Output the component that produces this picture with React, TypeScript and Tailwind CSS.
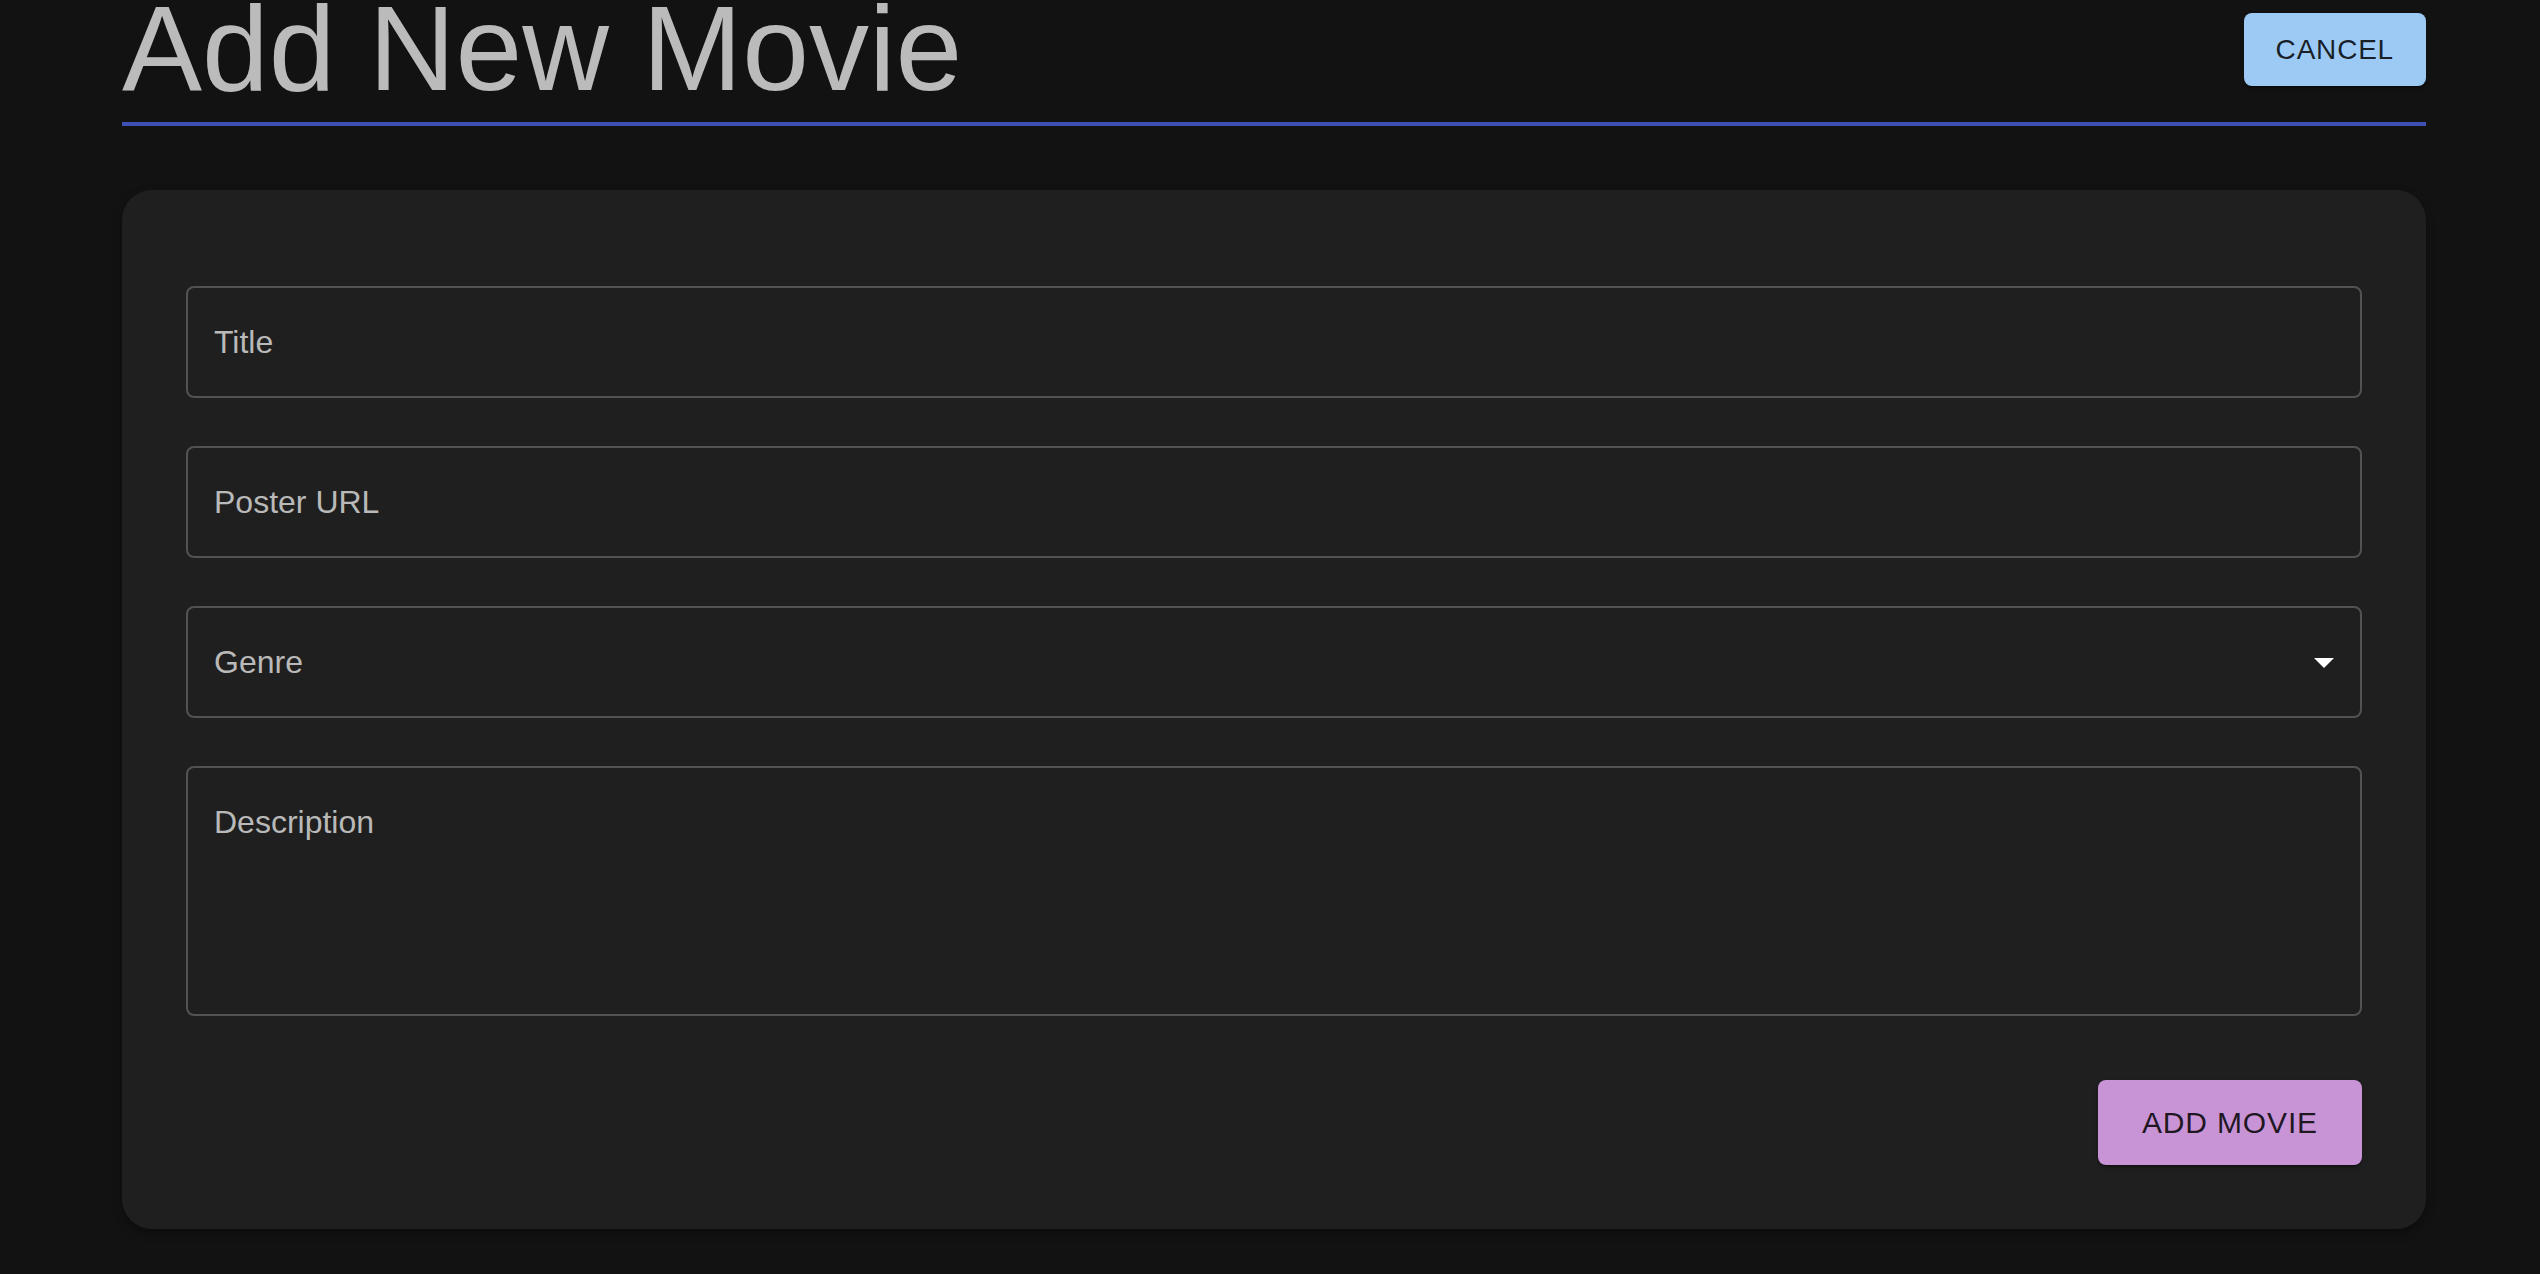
import React from "react";

function ArrowDropDown() {
  return (
    <svg viewBox="0 0 24 24" className="h-12 w-12 fill-white">
      <path d="M7 10l5 5 5-5z" />
    </svg>
  );
}

function TextField({ label }: { label: string }) {
  return (
    <input
      type="text"
      placeholder={label}
      className="mt-8 mb-4 block h-[112px] w-full rounded-lg border-2 border-[#525252] bg-transparent px-[26px] text-[32px] leading-[46px] text-white outline-none placeholder:text-[#b9b9b9]"
    />
  );
}

export default function App() {
  return (
    <main className="min-h-screen overflow-hidden bg-[#121212] font-['Liberation_Sans',Arial,sans-serif]">
      <div className="ml-[122px] w-[2304px]">
        <div className="-mt-6 flex items-center justify-between border-b-4 border-[#3f51b5] pb-[2px]">
          <h1 className="text-[120px] font-light leading-[1.2] text-[#bbbbbb]">
            Add New Movie
          </h1>
          <button className="mt-[3px] h-[73px] rounded-lg bg-[#9ccaf5] px-8 text-[28px] uppercase tracking-[0.8px] text-black/85 shadow-[0_3px_2px_-2px_rgba(0,0,0,0.4),0_2px_4px_rgba(0,0,0,0.25)]">
            Cancel
          </button>
        </div>

        <div className="mt-16 flex flex-col rounded-[30px] bg-[#1f1f1f] p-16 shadow-[0_4px_10px_rgba(0,0,0,0.35)]">
          <TextField label="Title" />
          <TextField label="Poster URL" />

          <div className="mt-8 mb-4 flex h-[112px] items-center rounded-lg border-2 border-[#525252] pl-[26px] pr-[12px] text-[32px] text-[#b9b9b9]">
            <span className="flex-1">Genre</span>
            <ArrowDropDown />
          </div>

          <textarea
            rows={4}
            placeholder="Description"
            className="mt-8 mb-4 block h-[250px] w-full resize-none rounded-lg border-2 border-[#525252] bg-transparent px-[26px] py-[31px] text-[32px] leading-[46px] text-white outline-none placeholder:text-[#b9b9b9]"
          />

          <div className="mt-12 flex justify-end">
            <button className="h-[85px] rounded-lg bg-[#c894d6] px-[44px] text-[30px] uppercase tracking-[0.86px] text-black/85 shadow-[0_3px_2px_-2px_rgba(0,0,0,0.4),0_2px_4px_rgba(0,0,0,0.25)]">
              Add Movie
            </button>
          </div>
        </div>
      </div>
    </main>
  );
}
